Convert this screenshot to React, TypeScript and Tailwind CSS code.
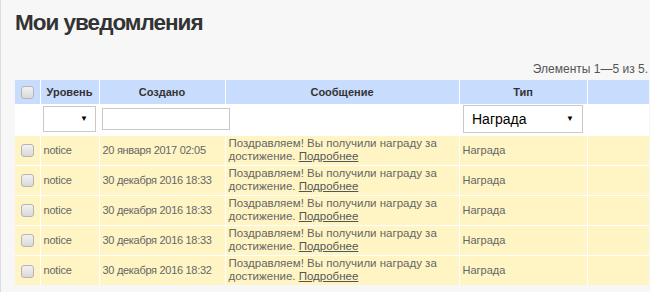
import React from "react";

const rows = [
  { level: "notice", created: "20 января 2017 02:05" },
  { level: "notice", created: "30 декабря 2016 18:33" },
  { level: "notice", created: "30 декабря 2016 18:33" },
  { level: "notice", created: "30 декабря 2016 18:33" },
  { level: "notice", created: "30 декабря 2016 18:32" },
];

function Check() {
  return (
    <span className="inline-block w-[13px] h-[13px] rounded-[3px] border border-[#b5b5b5] bg-gradient-to-b from-[#f2f2f2] to-[#d9d9d9] align-middle" />
  );
}

function Arrow() {
  return <span className="text-[8px] text-black leading-none">▼</span>;
}

export default function App() {
  return (
    <div
      className="w-[650px] h-[292px] bg-[#f7f7f7] border-l border-[#dcdcdc] pl-[14px] pr-[2px] overflow-hidden"
      style={{ fontFamily: '"Liberation Sans", Arial, sans-serif' }}
    >
      <h1 className="pt-[9px] text-[22.5px] font-bold text-[#333] leading-[28px] tracking-[-1px]">Мои уведомления</h1>

      <div className="mt-[25px] text-right text-[12px] text-[#555] leading-[14px]">Элементы 1—5 из 5.</div>

      <table className="mt-[4px] w-[634px] border-collapse table-fixed text-[11px]">
        <colgroup>
          <col className="w-[25px]" />
          <col className="w-[59px]" />
          <col className="w-[126px]" />
          <col className="w-[234px]" />
          <col className="w-[128px]" />
          <col />
        </colgroup>
        <thead>
          <tr className="h-[24px] bg-[#c8dcfd] text-[#333] font-bold">
            <th className="p-0 border-r border-white text-center"><Check /></th>
            <th className="p-0 border-r border-white text-center">Уровень</th>
            <th className="p-0 border-r border-white text-center">Создано</th>
            <th className="p-0 border-r border-white text-center">Сообщение</th>
            <th className="p-0 border-r border-white text-center">Тип</th>
            <th className="p-0" />
          </tr>
          <tr className="h-[31px] bg-white">
            <td className="p-0" />
            <td className="p-0 px-[3px]">
              <div className="h-[26px] border border-[#c8c8c8] bg-white flex items-center justify-end pr-[7px]">
                <Arrow />
              </div>
            </td>
            <td className="p-0 pl-[3px]">
              <div className="w-[128px] h-[22px] border border-[#c8c8c8] bg-white" />
            </td>
            <td className="p-0" />
            <td className="p-0 px-[4px]">
              <div className="h-[28px] border border-[#c8c8c8] bg-white flex items-center justify-between pl-[8px] pr-[8px]">
                <span className="text-[14px] text-black">Награда</span>
                <Arrow />
              </div>
            </td>
            <td className="p-0" />
          </tr>
        </thead>
        <tbody>
          {rows.map((r, i) => (
            <tr key={i} className="h-[30px] bg-[#fff5c4] text-[#666] border-t border-white">
              <td className="p-0 border-r border-white text-center"><Check /></td>
              <td className="p-0 border-r border-white pl-[3px] tracking-[-0.2px]">{r.level}</td>
              <td className="p-0 border-r border-white pl-[3px] tracking-[-0.3px]">{r.created}</td>
              <td className="p-0 border-r border-white pl-[3px] leading-[13px] text-[11.5px]">
                Поздравляем! Вы получили награду за
                <br />
                достижение. <span className="underline text-[#555]">Подробнее</span>
              </td>
              <td className="p-0 border-r border-white pl-[3px]">Награда</td>
              <td className="p-0" />
            </tr>
          ))}
        </tbody>
      </table>
    </div>
  );
}
